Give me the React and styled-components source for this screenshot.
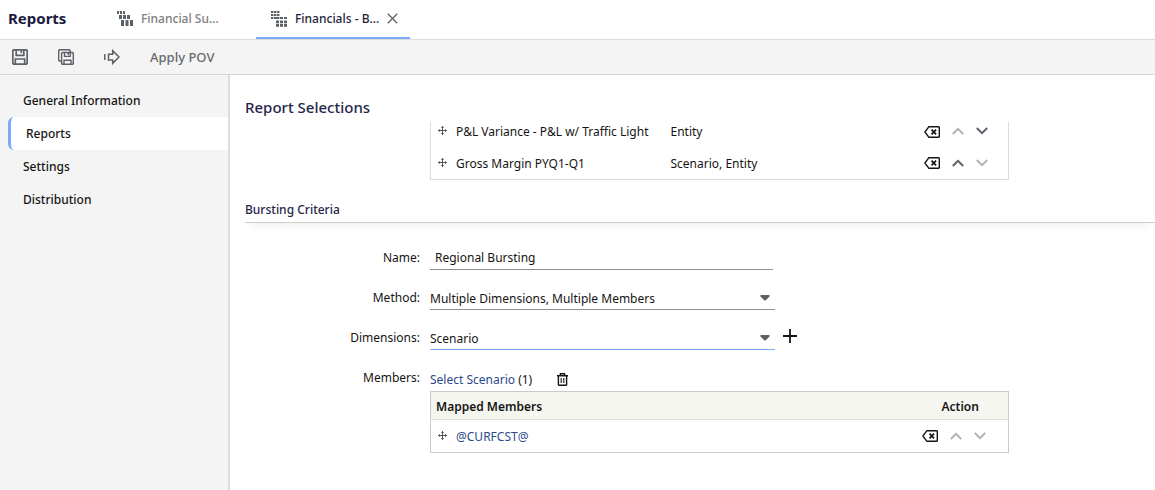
import React, {useState} from 'react';
import styled, {createGlobalStyle} from 'styled-components';

const GlobalStyle = createGlobalStyle`
  body {
    margin: 0;
    background: #ffffff;
  }
  * {
    box-sizing: border-box;
  }
  body, button, input, select {
    font-family: 'Noto Sans', 'Open Sans', sans-serif;
    font-size: 12px;
    color: #161513;
  }
`;

const Page = styled.div`
  display: flex;
  flex-direction: column;
  min-height: 100vh;
`;

const TabBar = styled.header`
  display: flex;
  height: 40px;
  border-bottom: 1px solid #dcdcdc;
`;

const AppTitle = styled.h1`
  width: 102px;
  margin: 0;
  padding-left: 8px;
  font-size: 15px;
  font-weight: 700;
  line-height: 37px;
  color: #1a1a40;
`;

const Tab = styled.div`
  display: flex;
  align-items: center;
  gap: 8px;
  width: 154px;
  padding: 0 8px 0 15px;
  border-bottom: 2px solid ${(p) => (p.$active ? '#7aabf7' : 'transparent')};
`;

const TabButton = styled.button`
  display: flex;
  align-items: center;
  gap: 8px;
  padding: 0;
  border: 0;
  background: none;
  font-size: 12px;
  font-weight: 500;
  line-height: 36px;
  white-space: nowrap;
  color: ${(p) => (p.$active ? '#1f1f3d' : '#7d7d7d')};
`;

const IconButton = styled.button`
  display: flex;
  padding: 0;
  border: 0;
  background: none;
  color: ${(p) => p.$color || '#5c6168'};

  &:disabled {
    color: #b0b2b5;
  }
`;

const Toolbar = styled.div`
  display: flex;
  align-items: center;
  gap: 30px;
  height: 35px;
  padding-left: 12px;
  background: #f4f4f4;
  border-bottom: 1px solid #d6d6d6;
`;

const ToolbarButton = styled.button`
  padding: 0;
  border: 0;
  background: none;
  font-size: 13px;
  font-weight: 500;
  color: #66696d;
`;

const Body = styled.div`
  display: flex;
  flex: 1;
`;

const Sidebar = styled.nav`
  flex: none;
  width: 230px;
  padding-top: 9px;
  background: #f4f4f4;
  border-right: 2px solid #dedede;
`;

const SideLink = styled.a`
  display: block;
  margin-left: 8px;
  padding-left: 15px;
  line-height: 33px;
  font-size: 12px;
  font-weight: 500;
  color: #161513;
  text-decoration: none;

  &[aria-current] {
    background: #ffffff;
    border-left: 3px solid #7aabf7;
    border-radius: 6px 0 0 6px;
  }
`;

const Main = styled.main`
  flex: 1;
  min-width: 0;
  padding: 20px 0 16px 15px;
`;

const PageTitle = styled.h2`
  margin: 0;
  font-size: 15px;
  font-weight: 500;
  line-height: 24px;
  color: #26264a;
`;

const ScrolledList = styled.div`
  margin: 3px 146px 0 185px;
  overflow: hidden;
`;

const ReportTable = styled.table`
  width: 100%;
  margin-top: -7px;
  border-collapse: collapse;
  border: 1px solid #dcdcdc;
  table-layout: fixed;

  td {
    height: 32px;
    padding: 0;
  }
`;

const NameCell = styled.div`
  display: flex;
  align-items: center;
  gap: 9px;
  padding-left: 7px;
  white-space: nowrap;
`;

const Actions = styled.div`
  display: flex;
  align-items: center;
  gap: 12px;
`;

const SectionTitle = styled.h3`
  margin: 20px 0 0;
  padding-bottom: 2px;
  border-bottom: 1px solid #cfcfcf;
  box-shadow: 0 8px 8px -6px #ececec;
  font-size: 12px;
  font-weight: 500;
  line-height: 20px;
  color: #26264a;
`;

const Form = styled.form`
  display: flex;
  flex-direction: column;
  gap: 16px;
  margin: 23px 146px 0 0;
`;

const Field = styled.div`
  display: grid;
  grid-template-columns: 175px minmax(0, 345px) auto;
  column-gap: 10px;
  justify-content: start;
  align-items: center;
`;

const Label = styled.label`
  text-align: right;
  line-height: 24px;
`;

const TextInput = styled.input`
  width: calc(100% - 2px);
  height: 24px;
  padding: 0 5px;
  border: 0;
  border-bottom: 1px solid #8f8f8f;
  background: none;
`;

const SelectWrap = styled.div`
  display: grid;
  align-items: center;
  border-bottom: 1px solid ${(p) => (p.$focused ? '#7aabf7' : '#8f8f8f')};

  > * {
    grid-area: 1 / 1;
  }

  svg {
    justify-self: end;
    margin-right: 5px;
    pointer-events: none;
  }
`;

const Select = styled.select`
  width: 100%;
  height: 23px;
  padding: 2px 0 0;
  border: 0;
  appearance: none;
  background: none;
`;

const AddButton = styled(IconButton)`
  align-self: start;
  margin-left: -2px;
  padding-top: 3px;
  color: #161513;
`;

const Members = styled.div`
  display: grid;
  grid-template-columns: 175px minmax(0, 1fr);
  column-gap: 10px;
`;

const MembersLabel = styled.span`
  text-align: right;
  line-height: 24px;
`;

const MembersLine = styled.div`
  display: flex;
  align-items: center;
  gap: 25px;
  height: 25px;
  padding-top: 2px;
`;

const Link = styled.a`
  color: #2c4a8c;
  text-decoration: none;
`;

const MemberTable = styled.table`
  width: 100%;
  border-collapse: collapse;
  border: 1px solid #cacaca;
  table-layout: fixed;

  th {
    height: 28px;
    padding: 2px 5px 0;
    background: #f5f6f0;
    border-bottom: 1px solid #dedfda;
    font-size: 12px;
    font-weight: 600;
    text-align: left;
  }

  th:last-child {
    padding-left: 20px;
  }

  td {
    height: 33px;
    padding: 0;
  }
`;

const TabSquares = ({squares}) => (
  <svg width="16" height="16" viewBox="0 0 16 16" fill="#5c6168">
    {squares.map(([x, y, w, h], i) => (
      <rect key={i} x={x} y={y} width={w} height={h} />
    ))}
  </svg>
);

const summarySquares = [
  [0, 0, 2, 3], [3, 0, 2, 3], [6, 0, 2, 3],
  [2, 4, 3, 4], [6, 4, 3, 4], [10, 4, 3, 4],
  [4, 9, 3, 6], [8.5, 9, 3, 6], [13, 9, 3, 6],
];

// two 3x3 blocks, the lower right one starts beside the last row of the first
const burstSquares = [];
for (let r = 0; r < 3; r++) {
  for (let c = 0; c < 3; c++) {
    burstSquares.push([c * 3, r * 3, 2.4, 2]);
    burstSquares.push([5 + c * 4, 6 + r * 3.5, 3, r ? 2.8 : 2]);
  }
}

const SaveIcon = () => (
  <svg width="16" height="16" viewBox="0 0 16 16" fill="none" stroke="currentColor" strokeWidth="1.7">
    <path d="M1.6.8h12.8l.8.8v12.8l-.8.8H1.6l-.8-.8V1.6z" />
    <path d="M4.2 1v5.3h7.6V1M9.3 1.5v2.6M3.3 15v-5h9.4v5" />
  </svg>
);

const SaveAllIcon = () => (
  <svg width="16" height="16" viewBox="0 0 16 16" fill="none" stroke="currentColor" strokeWidth="1.4">
    <path d="M3.2 12H1.4L.7 11.3V1.4L1.4.7h10l.7.7v1.5" />
    <path d="M4.3 3.5h10.3l.7.7v10.4l-.7.7H4.3l-.7-.7V4.2z" />
    <path d="M6.5 3.7v3.7h5.8V3.7M6 15v-3.8h7V15M10.3 4v2" />
  </svg>
);

const ForwardIcon = () => (
  <svg width="16" height="16" viewBox="0 0 16 16" fill="none" stroke="currentColor" strokeWidth="1.5">
    <path d="M.8 5v6M4.5 5.2V11h4.2v3.4L15 8 8.7 1.6v3.6z" />
  </svg>
);

const CloseIcon = () => (
  <svg width="11" height="11" viewBox="0 0 11 11" fill="none" stroke="currentColor" strokeWidth="1.3">
    <path d="M.8.8l9.4 9.4M10.2.8L.8 10.2" />
  </svg>
);

const MoveIcon = () => (
  <svg width="9" height="11" viewBox="0 0 9 11" fill="none" stroke="#55595f">
    <path d="M4.5 0v9M0 4.5h9" />
    <path d="M3 1.5h3M3 7.5h3M1.5 3v3M7.5 3v3" strokeOpacity=".7" />
  </svg>
);

const ClearIcon = () => (
  <svg width="16" height="12" viewBox="0 0 16 12" fill="none" stroke="currentColor" strokeWidth="1.4">
    <path d="M4.9.7h9.7l.7.7v9.2l-.7.7H4.9L.9 6z" />
    <path d="M7.5 3.7l4.6 4.6M12.1 3.7L7.5 8.3" strokeWidth="1.7" />
  </svg>
);

const Chevron = ({down}) => (
  <svg width="12" height="9" viewBox="0 0 12 9" fill="none" stroke="currentColor" strokeWidth="2">
    <path d={down ? 'M.8 1L6 6.2 11.2 1' : 'M.8 7L6 1.8 11.2 7'} />
  </svg>
);

const Caret = () => (
  <svg width="10" height="6" viewBox="0 0 10 6" fill="#5c6168">
    <path d="M0 1L1 0h8l1 1-4.5 4.5h-1z" />
  </svg>
);

const PlusIcon = () => (
  <svg width="14" height="14" viewBox="0 0 14 14" stroke="currentColor" strokeWidth="1.8">
    <path d="M7 0v14M0 7h14" />
  </svg>
);

const TrashIcon = () => (
  <svg width="11" height="13" viewBox="0 0 11 13" fill="none" stroke="currentColor" strokeWidth="1.4">
    <path d="M0 2.7h11M3.4 2.5V.7h4.2v1.8M1.4 3v8.8l.5.5h7.2l.5-.5V3" />
    <path d="M4.2 5v5M6.8 5v5" strokeWidth="1.1" />
  </svg>
);

const RowActions = ({first, last}) => (
  <Actions>
    <IconButton type="button" $color="#161513" aria-label="Clear"><ClearIcon /></IconButton>
    <IconButton type="button" disabled={first} aria-label="Move up"><Chevron /></IconButton>
    <IconButton type="button" disabled={last} aria-label="Move down"><Chevron down /></IconButton>
  </Actions>
);

const sections = ['General Information', 'Reports', 'Settings', 'Distribution'];

const reports = [
  {name: 'P&L Variance - P&L w/ Traffic Light', dims: 'Entity', first: true},
  {name: 'Gross Margin PYQ1-Q1', dims: 'Scenario, Entity', last: true},
];

function App() {
  const [section, setSection] = useState('Reports');
  const [name, setName] = useState('Regional Bursting');

  return (
    <Page>
      <GlobalStyle />
      <TabBar>
        <AppTitle>Reports</AppTitle>
        <Tab>
          <TabButton type="button"><TabSquares squares={summarySquares} />Financial Su...</TabButton>
        </Tab>
        <Tab $active>
          <TabButton type="button" $active><TabSquares squares={burstSquares} />Financials - B...</TabButton>
          <IconButton type="button" aria-label="Close tab"><CloseIcon /></IconButton>
        </Tab>
      </TabBar>
      <Toolbar>
        <IconButton type="button" aria-label="Save"><SaveIcon /></IconButton>
        <IconButton type="button" aria-label="Save as"><SaveAllIcon /></IconButton>
        <IconButton type="button" aria-label="Run"><ForwardIcon /></IconButton>
        <ToolbarButton type="button">Apply POV</ToolbarButton>
      </Toolbar>
      <Body>
        <Sidebar>
          {sections.map((s) => (
            <SideLink
              key={s}
              href="#"
              aria-current={s === section ? 'page' : undefined}
              onClick={() => setSection(s)}
            >
              {s}
            </SideLink>
          ))}
        </Sidebar>
        <Main>
          <PageTitle>Report Selections</PageTitle>
          <ScrolledList>
            <ReportTable>
              <colgroup>
                <col width="240" />
                <col />
                <col width="85" />
              </colgroup>
              <tbody>
                {reports.map((r) => (
                  <tr key={r.name}>
                    <td><NameCell><MoveIcon />{r.name}</NameCell></td>
                    <td>{r.dims}</td>
                    <td><RowActions first={r.first} last={r.last} /></td>
                  </tr>
                ))}
              </tbody>
            </ReportTable>
          </ScrolledList>

          <SectionTitle>Bursting Criteria</SectionTitle>
          <Form>
            <Field>
              <Label htmlFor="name">Name:</Label>
              <TextInput id="name" value={name} onChange={(e) => setName(e.target.value)} />
            </Field>
            <Field>
              <Label htmlFor="method">Method:</Label>
              <SelectWrap>
                <Select id="method">
                  <option>Multiple Dimensions, Multiple Members</option>
                </Select>
                <Caret />
              </SelectWrap>
            </Field>
            <Field>
              <Label htmlFor="dimensions">Dimensions:</Label>
              <SelectWrap $focused>
                <Select id="dimensions">
                  <option>Scenario</option>
                </Select>
                <Caret />
              </SelectWrap>
              <AddButton type="button" aria-label="Add dimension"><PlusIcon /></AddButton>
            </Field>
            <Members>
              <MembersLabel>Members:</MembersLabel>
              <div>
                <MembersLine>
                  <span><Link href="#">Select Scenario</Link> (1)</span>
                  <IconButton type="button" $color="#161513" aria-label="Delete"><TrashIcon /></IconButton>
                </MembersLine>
                <MemberTable>
                  <colgroup>
                    <col />
                    <col width="87" />
                  </colgroup>
                  <thead>
                    <tr>
                      <th>Mapped Members</th>
                      <th>Action</th>
                    </tr>
                  </thead>
                  <tbody>
                    <tr>
                      <td><NameCell><MoveIcon /><Link href="#">@CURFCST@</Link></NameCell></td>
                      <td><RowActions first last /></td>
                    </tr>
                  </tbody>
                </MemberTable>
              </div>
            </Members>
          </Form>
        </Main>
      </Body>
    </Page>
  );
}

export default App;
